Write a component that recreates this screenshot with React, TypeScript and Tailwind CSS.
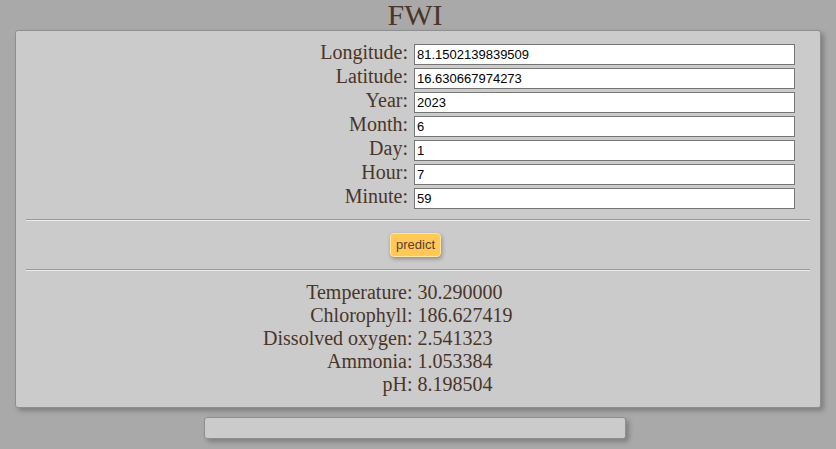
const FIELDS = [
  { label: "Longitude:", value: "81.1502139839509" },
  { label: "Latitude:", value: "16.630667974273" },
  { label: "Year:", value: "2023" },
  { label: "Month:", value: "6" },
  { label: "Day:", value: "1" },
  { label: "Hour:", value: "7" },
  { label: "Minute:", value: "59" },
];

const RESULTS = [
  { label: "Temperature:", value: "30.290000" },
  { label: "Chlorophyll:", value: "186.627419" },
  { label: "Dissolved oxygen:", value: "2.541323" },
  { label: "Ammonia:", value: "1.053384" },
  { label: "pH:", value: "8.198504" },
];

function Rule() {
  return <div className="h-[2px] border-t border-[#9a9a9a] bg-[#ececec]" />;
}

export default function App() {
  return (
    <div className="min-h-[449px] bg-[#a9a9a9] font-['Liberation_Serif',serif] text-[#4a3528]">
      <h1 className="h-[30px] pr-[6px] text-center text-[30px] leading-[30px]">FWI</h1>

      <div className="mx-[15px] rounded-[3px] border border-[#8f8f8f] bg-[#cbcbcb] px-[10px] pb-[11px] pt-[13px] shadow-[3px_3px_5px_rgba(0,0,0,0.25)]">
        <div className="grid grid-cols-[382px_381px] gap-x-[6px] gap-y-[3px]">
          {FIELDS.map((f) => (
            <div key={f.label} className="contents">
              <label className="text-right text-[20px] leading-[17px]">{f.label}</label>
              <input
                readOnly
                value={f.value}
                className="h-[21px] border border-[#767676] bg-white px-[2px] font-['Liberation_Sans',sans-serif] text-[13px] text-black outline-none"
              />
            </div>
          ))}
        </div>

        <div className="mt-[10px]">
          <Rule />
        </div>

        <div className="flex justify-center py-[12px]">
          <button className="mr-[5px] h-[24px] rounded-[4px] border border-[#ffe3a0] bg-[#ffc857] px-[5px] font-['Liberation_Sans',sans-serif] text-[13px] text-[#5a4030] shadow-[1px_2px_4px_rgba(0,0,0,0.3)]">
            predict
          </button>
        </div>

        <Rule />

        <div className="mt-[10px] grid grid-cols-[1fr_1fr] gap-x-[5px] pr-[6px] text-[20px] leading-[23px]">
          {RESULTS.map((r) => (
            <div key={r.label} className="contents">
              <span className="text-right">{r.label}</span>
              <span>{r.value}</span>
            </div>
          ))}
        </div>
      </div>

      <div className="mt-[9px] flex justify-center pr-[6px]">
        <div className="h-[22px] w-[422px] rounded-[3px] border border-[#8f8f8f] bg-[#cbcbcb] shadow-[3px_3px_5px_rgba(0,0,0,0.25)]" />
      </div>
    </div>
  );
}
